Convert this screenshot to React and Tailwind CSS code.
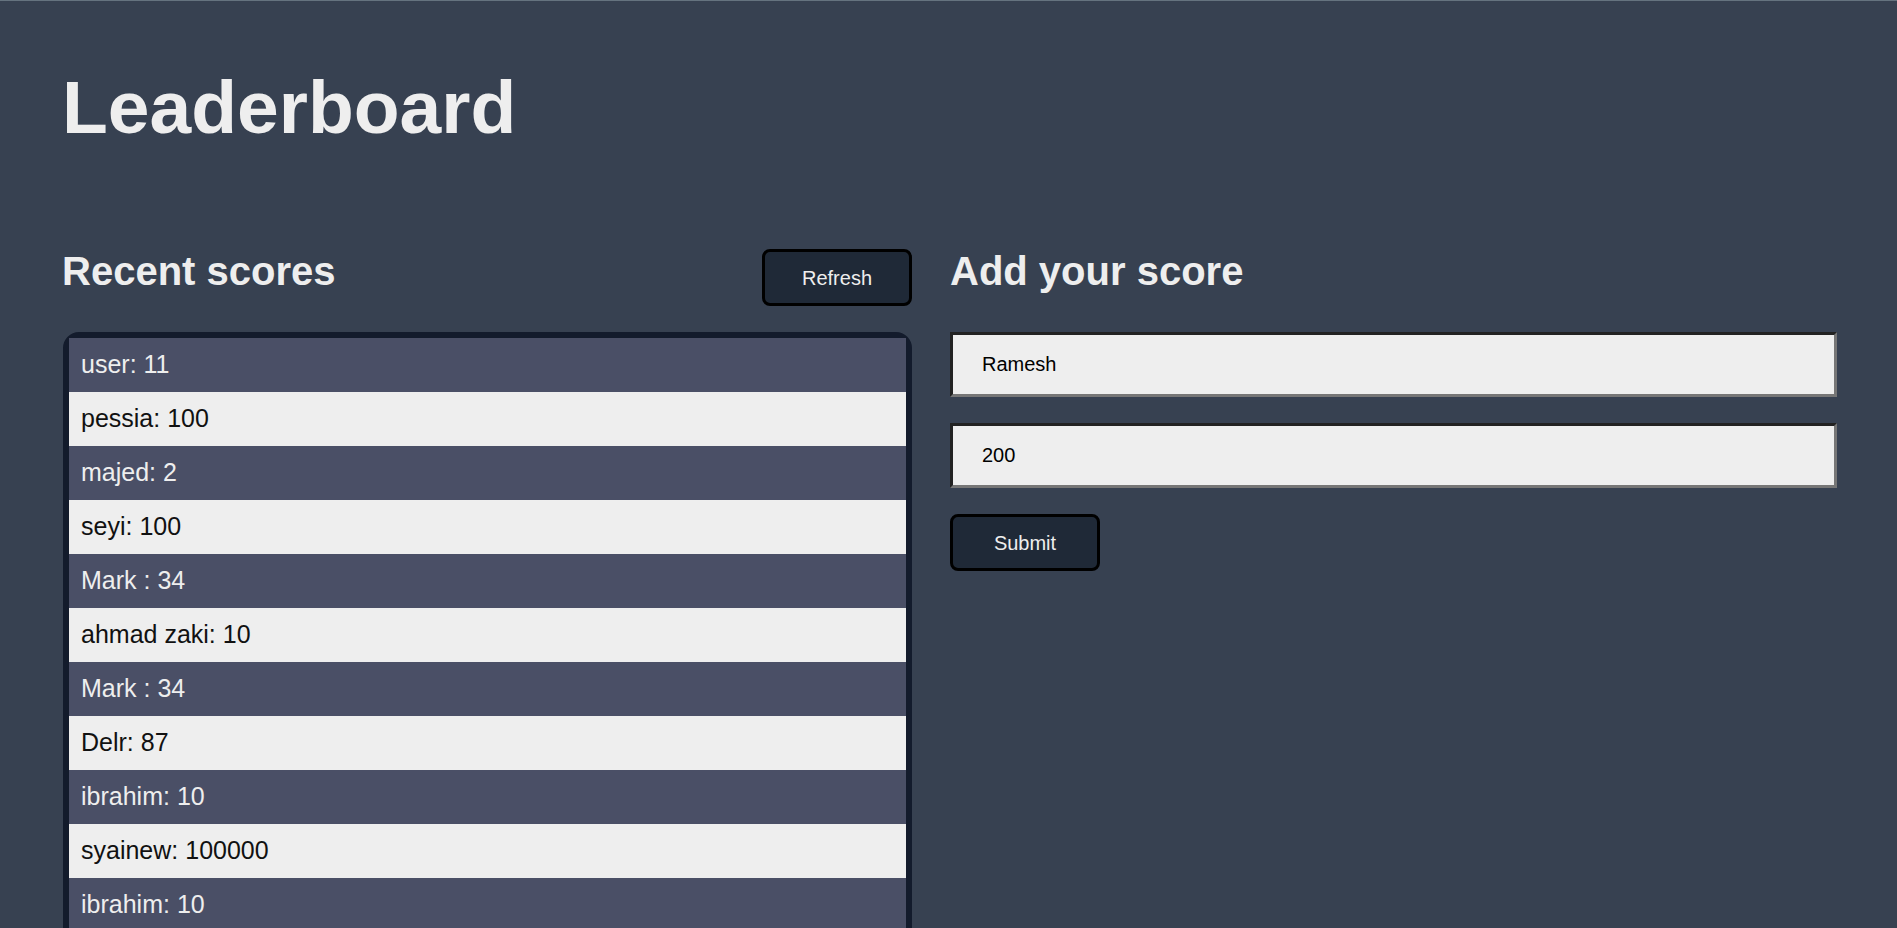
import React, { useState } from 'react';

const initialScores = [
  { user: 'user', score: 11 },
  { user: 'pessia', score: 100 },
  { user: 'majed', score: 2 },
  { user: 'seyi', score: 100 },
  { user: 'Mark ', score: 34 },
  { user: 'ahmad zaki', score: 10 },
  { user: 'Mark ', score: 34 },
  { user: 'Delr', score: 87 },
  { user: 'ibrahim', score: 10 },
  { user: 'syainew', score: 100000 },
  { user: 'ibrahim', score: 10 },
  { user: 'john', score: 42 },
  { user: 'test', score: 5 },
];

const App = () => {
  const [scores, setScores] = useState(initialScores);
  const [name, setName] = useState('Ramesh');
  const [score, setScore] = useState('200');

  const handleSubmit = (e) => {
    e.preventDefault();
    if (!name || !score) return;
    setScores([{ user: name, score: Number(score) }, ...scores]);
  };

  return (
    <div className="min-h-screen bg-[#374151] border-t border-[#65737f] pl-[62px] pr-[60px] font-['Liberation_Sans',Arial,sans-serif]">
      <h1 className="pt-[63px] text-[75px] leading-[86px] font-bold text-[#eeeeee]">Leaderboard</h1>

      <div className="mt-[98px] flex gap-[38px]">
        {/* recent scores */}
        <div className="w-[850px] shrink-0">
          <div className="flex justify-between items-start">
            <h2 className="text-[40px] leading-[46px] font-bold text-[#eeeeee]">Recent scores</h2>
            <button
              onClick={() => setScores([...scores])}
              className="mt-px w-[150px] h-[57px] rounded-[8px] border-[3px] border-black bg-[#1f2937] text-[20px] text-[#eeeeee]"
            >
              Refresh
            </button>
          </div>
          <ul className="mt-[26px] ml-px border-[6px] border-[#131b2c] rounded-[16px] bg-[#131b2c]">
            {scores.map((s, i) => (
              <li
                key={i}
                className={`h-[54px] flex items-center pl-[12px] text-[25px] ${
                  i % 2 === 0 ? 'bg-[#4a4f66] text-[#eeeeee]' : 'bg-[#eeeeee] text-[#111111]'
                }`}
              >
                {s.user}: {s.score}
              </li>
            ))}
          </ul>
        </div>

        {/* add score */}
        <form className="flex-1 flex flex-col items-start" onSubmit={handleSubmit}>
          <h2 className="text-[40px] leading-[46px] font-bold text-[#eeeeee]">Add your score</h2>
          <input
            type="text"
            value={name}
            onChange={(e) => setName(e.target.value)}
            className="mt-[38px] w-full h-[65px] bg-[#eeeeee] border-[3px] border-t-[#222222] border-l-[#222222] border-b-[#767676] border-r-[#767676] pl-[29px] text-[20px] text-black outline-none"
          />
          <input
            type="text"
            value={score}
            onChange={(e) => setScore(e.target.value)}
            className="mt-[26px] w-full h-[65px] bg-[#eeeeee] border-[3px] border-t-[#222222] border-l-[#222222] border-b-[#767676] border-r-[#767676] pl-[29px] text-[20px] text-black outline-none"
          />
          <button
            type="submit"
            className="mt-[26px] w-[150px] h-[57px] rounded-[8px] border-[3px] border-black bg-[#1f2937] text-[20px] text-[#eeeeee]"
          >
            Submit
          </button>
        </form>
      </div>
    </div>
  );
};

export default App;
